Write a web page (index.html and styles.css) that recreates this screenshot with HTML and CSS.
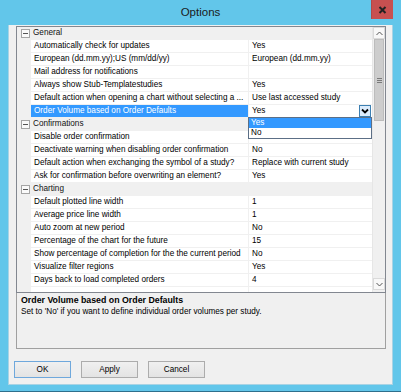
FILE: index.html
```html
<!DOCTYPE html>
<html lang="en">
<head>
    <meta charset="UTF-8">
    <title>Options</title>
    <link rel="stylesheet" href="styles.css">
</head>
<body>
    <div class="window">
        <div class="titlebar">
            <span></span>
            <span class="title">Options</span>
            <button class="close">
                <svg width="9" height="8" viewBox="0 0 9 8"><path d="M1.5 1 L7.5 7 M7.5 1 L1.5 7" stroke="#222" stroke-width="2"/></svg>
            </button>
        </div>

        <div class="client">
            <div class="grid">
                <div class="rows">
                    <div class="cat"><span class="gutter"><i class="toggle"></i></span>General</div>
                    <div class="row"><span class="gutter"></span><span class="name">Automatically check for updates</span><span class="value">Yes</span></div>
                    <div class="row"><span class="gutter"></span><span class="name">European (dd.mm.yy);US (mm/dd/yy)</span><span class="value">European (dd.mm.yy)</span></div>
                    <div class="row"><span class="gutter"></span><span class="name">Mail address for notifications</span><span class="value"></span></div>
                    <div class="row"><span class="gutter"></span><span class="name">Always show Stub-Templatestudies</span><span class="value">Yes</span></div>
                    <div class="row"><span class="gutter"></span><span class="name">Default action when opening a chart without selecting a ...</span><span class="value">Use last accessed study</span></div>
                    <div class="row selected"><span class="gutter"></span><span class="name">Order Volume based on Order Defaults</span><span class="value">Yes
                        <span class="drop-btn"><svg width="8" height="6" viewBox="0 0 8 6"><path d="M1 1.5 L4 4.5 L7 1.5" fill="none" stroke="#000" stroke-width="1.8"/></svg></span></span></div>

                    <div class="cat"><span class="gutter"><i class="toggle"></i></span>Confirmations</div>
                    <div class="row"><span class="gutter"></span><span class="name">Disable order confirmation</span><span class="value"></span></div>
                    <div class="row"><span class="gutter"></span><span class="name">Deactivate warning when disabling order confirmation</span><span class="value">No</span></div>
                    <div class="row"><span class="gutter"></span><span class="name">Default action when exchanging the symbol of a study?</span><span class="value">Replace with current study</span></div>
                    <div class="row"><span class="gutter"></span><span class="name">Ask for confirmation before overwriting an element?</span><span class="value">Yes</span></div>

                    <div class="cat"><span class="gutter"><i class="toggle"></i></span>Charting</div>
                    <div class="row"><span class="gutter"></span><span class="name">Default plotted line width</span><span class="value">1</span></div>
                    <div class="row"><span class="gutter"></span><span class="name">Average price line width</span><span class="value">1</span></div>
                    <div class="row"><span class="gutter"></span><span class="name">Auto zoom at new period</span><span class="value">No</span></div>
                    <div class="row"><span class="gutter"></span><span class="name">Percentage of the chart for the future</span><span class="value">15</span></div>
                    <div class="row"><span class="gutter"></span><span class="name">Show percentage of completion for the the current period</span><span class="value">No</span></div>
                    <div class="row"><span class="gutter"></span><span class="name">Visualize filter regions</span><span class="value">Yes</span></div>
                    <div class="row"><span class="gutter"></span><span class="name">Days back to load completed orders</span><span class="value">4</span></div>
                    <div class="row partial"><span class="gutter"></span><span class="name"></span><span class="value"></span></div>

                    <!-- open combo list -->
                    <div class="dropdown">
                        <div class="item active">Yes</div>
                        <div class="item">No</div>
                    </div>
                </div>

                <div class="vscroll">
                    <span class="arrow">
                        <svg width="7" height="5" viewBox="0 0 7 5"><path d="M0.5 4 L3.5 1 L6.5 4" fill="none" stroke="#555" stroke-width="1"/></svg>
                    </span>
                    <div class="track">
                        <div class="thumb"><span class="grip"></span></div>
                    </div>
                    <span class="arrow">
                        <svg width="7" height="5" viewBox="0 0 7 5"><path d="M0.5 1 L3.5 4 L6.5 1" fill="none" stroke="#555" stroke-width="1"/></svg>
                    </span>
                </div>
            </div>

            <div class="desc">
                <h3>Order Volume based on Order Defaults</h3>
                <p>Set to 'No' if you want to define individual order volumes per study.</p>
            </div>

            <div class="buttons">
                <button class="btn default">OK</button>
                <button class="btn">Apply</button>
                <button class="btn">Cancel</button>
            </div>
        </div>
    </div>
</body>
</html>
```

FILE: styles.css
```css
* {
    margin: 0;
    padding: 0;
    box-sizing: border-box;
}

body {
    width: 401px;
    height: 392px;
    overflow: hidden;
    background: #62c6ea;
    font-family: "Liberation Sans", Arial, sans-serif;
    font-size: 8.2px;
    color: #000;
}

.window {
    height: 392px;
    display: flex;
    flex-direction: column;
    padding: 0 8px 6px;
    background: #62c6ea;
    border-bottom: 1px solid #2f6f8c;
}

/* Title bar */
.titlebar {
    height: 25px;
    display: grid;
    grid-template-columns: 1fr auto 1fr;
    align-items: start;
}

.title {
    margin-top: 6px;
    font-size: 11.5px;
    color: #1b1b1b;
}

.close {
    justify-self: end;
    width: 22px;
    height: 19px;
    display: flex;
    align-items: center;
    justify-content: center;
    background: #c75050;
    border: none;
    border-left: 1px solid #b14848;
}

/* Client area */
.client {
    flex: 1;
    display: flex;
    flex-direction: column;
    padding: 1px 6px 0 7px;
    background: #f0f0f0;
    border: 1px solid #a9d3e4;
    border-top: none;
}

/* Property grid */
.grid {
    height: 267px;
    display: flex;
    border: 1px solid #828790;
    background: #fff;
}

.rows {
    flex: 1;
    position: relative;
    overflow: hidden;
}

.row,
.cat {
    height: 13px;
    line-height: 12px;
    display: flex;
    white-space: nowrap;
}

.gutter {
    width: 14px;
    flex: none;
    display: flex;
    align-items: center;
    justify-content: center;
    background: #f0f0f0;
}

.cat {
    background: #f0f0f0;
    color: #111;
}

.cat .gutter {
    margin-right: 2px;
}

.toggle {
    position: relative;
    width: 9px;
    height: 9px;
    margin-left: 2px;
    border: 1px solid #a5a5a5;
    background: #fafafa;
}

.toggle::after {
    content: "";
    position: absolute;
    left: 1px;
    top: 3px;
    width: 5px;
    height: 1px;
    background: #555;
}

.name {
    width: 218px;
    flex: none;
    padding-left: 3px;
    overflow: hidden;
    border-right: 1px solid #f0f0f0;
    border-bottom: 1px solid #f0f0f0;
}

.value {
    flex: 1;
    display: flex;
    align-items: flex-start;
    padding-left: 3px;
    border-bottom: 1px solid #f0f0f0;
}

.selected .name {
    background: #3399ff;
    color: #fff;
}

.drop-btn {
    width: 12px;
    height: 12px;
    margin-left: auto;
    margin-right: 1px;
    display: flex;
    align-items: center;
    justify-content: center;
    background: #dcecfc;
    border: 1px solid #3c7fb1;
}

.dropdown {
    position: absolute;
    left: 231px;
    top: 90px;
    width: 124px;
    background: #fff;
    border: 1px solid #5c6f86;
}

.dropdown .item {
    height: 10px;
    line-height: 10px;
    padding-left: 2px;
}

.dropdown .active {
    background: #3399ff;
    color: #fff;
}

/* Scrollbar */
.vscroll {
    width: 13px;
    flex: none;
    display: flex;
    flex-direction: column;
    padding-bottom: 2px;
    background: #f0f0f0;
    border-left: 1px solid #e6e6e6;
}

.arrow {
    height: 12px;
    display: flex;
    align-items: center;
    justify-content: center;
    background: #f8f8f8;
    border: 1px solid #dadada;
}

.track {
    flex: 1;
    padding: 0 1px;
}

.thumb {
    height: 82px;
    display: flex;
    align-items: center;
    justify-content: center;
    background: #cdcdcd;
    border: 1px solid #bcbcbc;
}

.grip {
    width: 5px;
    height: 5px;
    border-top: 1px solid #7a7a7a;
    border-bottom: 1px solid #7a7a7a;
    background: linear-gradient(#7a7a7a, #7a7a7a) center / 5px 1px no-repeat;
}

/* Description panel */
.desc {
    height: 56px;
    padding: 2px 4px;
    border: 1px solid #a0a0a0;
    border-top: none;
    line-height: 11px;
}

.desc h3 {
    font-size: 8.8px;
    font-weight: bold;
}

/* Buttons */
.buttons {
    display: flex;
    gap: 10px;
    margin: 12px 0 0 -2px;
}

.btn {
    width: 57px;
    height: 17px;
    font-family: inherit;
    font-size: 8.2px;
    color: #000;
    background: linear-gradient(#f0f0f0, #e3e3e3);
    border: 1px solid #acacac;
}

.btn.default {
    border-color: #6fa8dc;
}
```
